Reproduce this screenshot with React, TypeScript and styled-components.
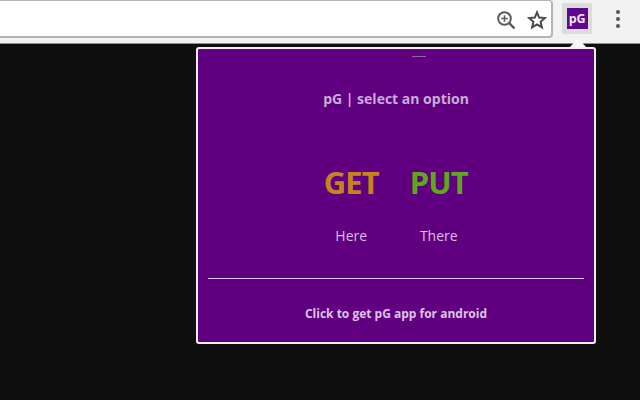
import React from 'react';
import styled, { createGlobalStyle } from 'styled-components';

const GlobalStyle = createGlobalStyle`
  html, body {
    margin: 0;
    padding: 0;
    width: 640px;
    height: 400px;
    overflow: hidden;
    background: #0f0f0f;
    font-family: "Open Sans", "Noto Sans", sans-serif;
  }
`;

const Page = styled.div`
  position: relative;
  width: 640px;
  height: 400px;
  background: #0f0f0f;
`;

const Toolbar = styled.div`
  display: flex;
  height: 44px;
  box-sizing: border-box;
  background: #f2f2f2;
  border-bottom: 1px solid #8f8f8f;
`;

const AddressBar = styled.div`
  flex: 0 0 553px;
  height: 38px;
  box-sizing: border-box;
  display: flex;
  align-items: center;
  justify-content: flex-end;
  gap: 9.5px;
  padding: 3px 3px 0 0;
  background: #fff;
  border: 2px solid #b4b4b4;
  border-left: 0;
  border-top-width: 1px;
  border-radius: 0 4px 4px 0;
`;

const IconSlot = styled.div`
  display: flex;
  width: 22px;
  height: 22px;
  align-items: center;
  justify-content: center;
`;

const ExtensionButton = styled.div`
  flex: 0 0 30px;
  height: 31px;
  margin: 3px 0 0 9px;
  display: flex;
  align-items: center;
  justify-content: center;
  background: #dcdcdc;
  border-radius: 2px;
`;

const ExtensionLogo = styled.div`
  width: 21px;
  height: 21px;
  display: flex;
  align-items: center;
  justify-content: center;
  background: #5f0a8c;
  color: #f1e6f5;
  font-size: 12.5px;
  font-weight: 700;
  letter-spacing: -0.2px;
`;

const MenuDots = styled.div`
  flex: 0 0 auto;
  margin: 10px 0 0 24px;
  display: flex;
  flex-direction: column;
  gap: 3px;
`;

const Dot = styled.span`
  width: 4px;
  height: 4px;
  border-radius: 50%;
  background: #555;
`;

const Arrow = styled.div`
  position: absolute;
  left: 570px;
  top: 38px;
  width: 0;
  height: 0;
  border-left: 8px solid transparent;
  border-right: 8px solid transparent;
  border-bottom: 9px solid #f7f7f7;
`;

const Popup = styled.div`
  position: absolute;
  left: 196px;
  top: 47px;
  width: 400px;
  height: 297px;
  box-sizing: border-box;
  display: flex;
  flex-direction: column;
  align-items: center;
  padding: 0 10px;
  background: #600080;
  border: 2px solid #f4f0f5;
  border-radius: 3px;
`;

const TopTick = styled.div`
  align-self: flex-start;
  width: 14px;
  height: 1px;
  margin: 7px 0 0 204px;
  background: #8f66a3;
`;

const Title = styled.div`
  margin-top: 32px;
  height: 20px;
  line-height: 20px;
  color: #c7add3;
  font-size: 14px;
  font-weight: 700;
`;

const Options = styled.div`
  display: flex;
  justify-content: center;
  gap: 30px;
  margin: 53px 2px 0 0;
`;

const Option = styled.div`
  width: 57.5px;
  display: flex;
  flex-direction: column;
  align-items: center;
`;

const OptionLabel = styled.div<{ $color: string }>`
  height: 40px;
  line-height: 40px;
  color: ${(p) => p.$color};
  font-size: 31px;
  font-weight: 700;
  letter-spacing: -0.9px;
`;

const OptionHint = styled.div`
  margin-top: 24px;
  height: 20px;
  line-height: 20px;
  color: #d9bfe4;
  font-size: 14px;
  white-space: nowrap;
`;

const Divider = styled.div`
  align-self: stretch;
  height: 1px;
  margin-top: 32px;
  background: #dcc7e4;
`;

const Footer = styled.div`
  margin-top: 27px;
  height: 16px;
  line-height: 16px;
  color: #dcc3e6;
  font-size: 12px;
  font-weight: 700;
`;

const ZoomIcon = () => (
  <svg width="20" height="20" viewBox="0 0 20 20" fill="none" stroke="#5a5a5a" strokeWidth="2">
    <circle cx="8.5" cy="8.5" r="6.3" />
    <path d="M13.2 13.2 L18.5 18.5" strokeWidth="2.4" />
    <path d="M8.5 5.2 V11.8 M5.2 8.5 H11.8" strokeWidth="1.6" />
  </svg>
);

const StarIcon = () => (
  <svg width="20" height="20" viewBox="0 0 20 20" fill="none" stroke="#4a4a4a" strokeWidth="2" strokeLinejoin="miter">
    <path d="M10 2.4 L12.2 7.6 L17.9 8.1 L13.6 11.8 L14.9 17.4 L10 14.4 L5.1 17.4 L6.4 11.8 L2.1 8.1 L7.8 7.6 Z" />
  </svg>
);

export default function App() {
  return (
    <Page>
      <GlobalStyle />
      <Toolbar>
        <AddressBar>
          <IconSlot>
            <ZoomIcon />
          </IconSlot>
          <IconSlot>
            <StarIcon />
          </IconSlot>
        </AddressBar>
        <ExtensionButton>
          <ExtensionLogo>pG</ExtensionLogo>
        </ExtensionButton>
        <MenuDots>
          <Dot />
          <Dot />
          <Dot />
        </MenuDots>
      </Toolbar>
      <Arrow />
      <Popup>
        <TopTick />
        <Title>pG | select an option</Title>
        <Options>
          <Option>
            <OptionLabel $color="#c8831f">GET</OptionLabel>
            <OptionHint>Here</OptionHint>
          </Option>
          <Option>
            <OptionLabel $color="#62a51f">PUT</OptionLabel>
            <OptionHint>There</OptionHint>
          </Option>
        </Options>
        <Divider />
        <Footer>Click to get pG app for android</Footer>
      </Popup>
    </Page>
  );
}
